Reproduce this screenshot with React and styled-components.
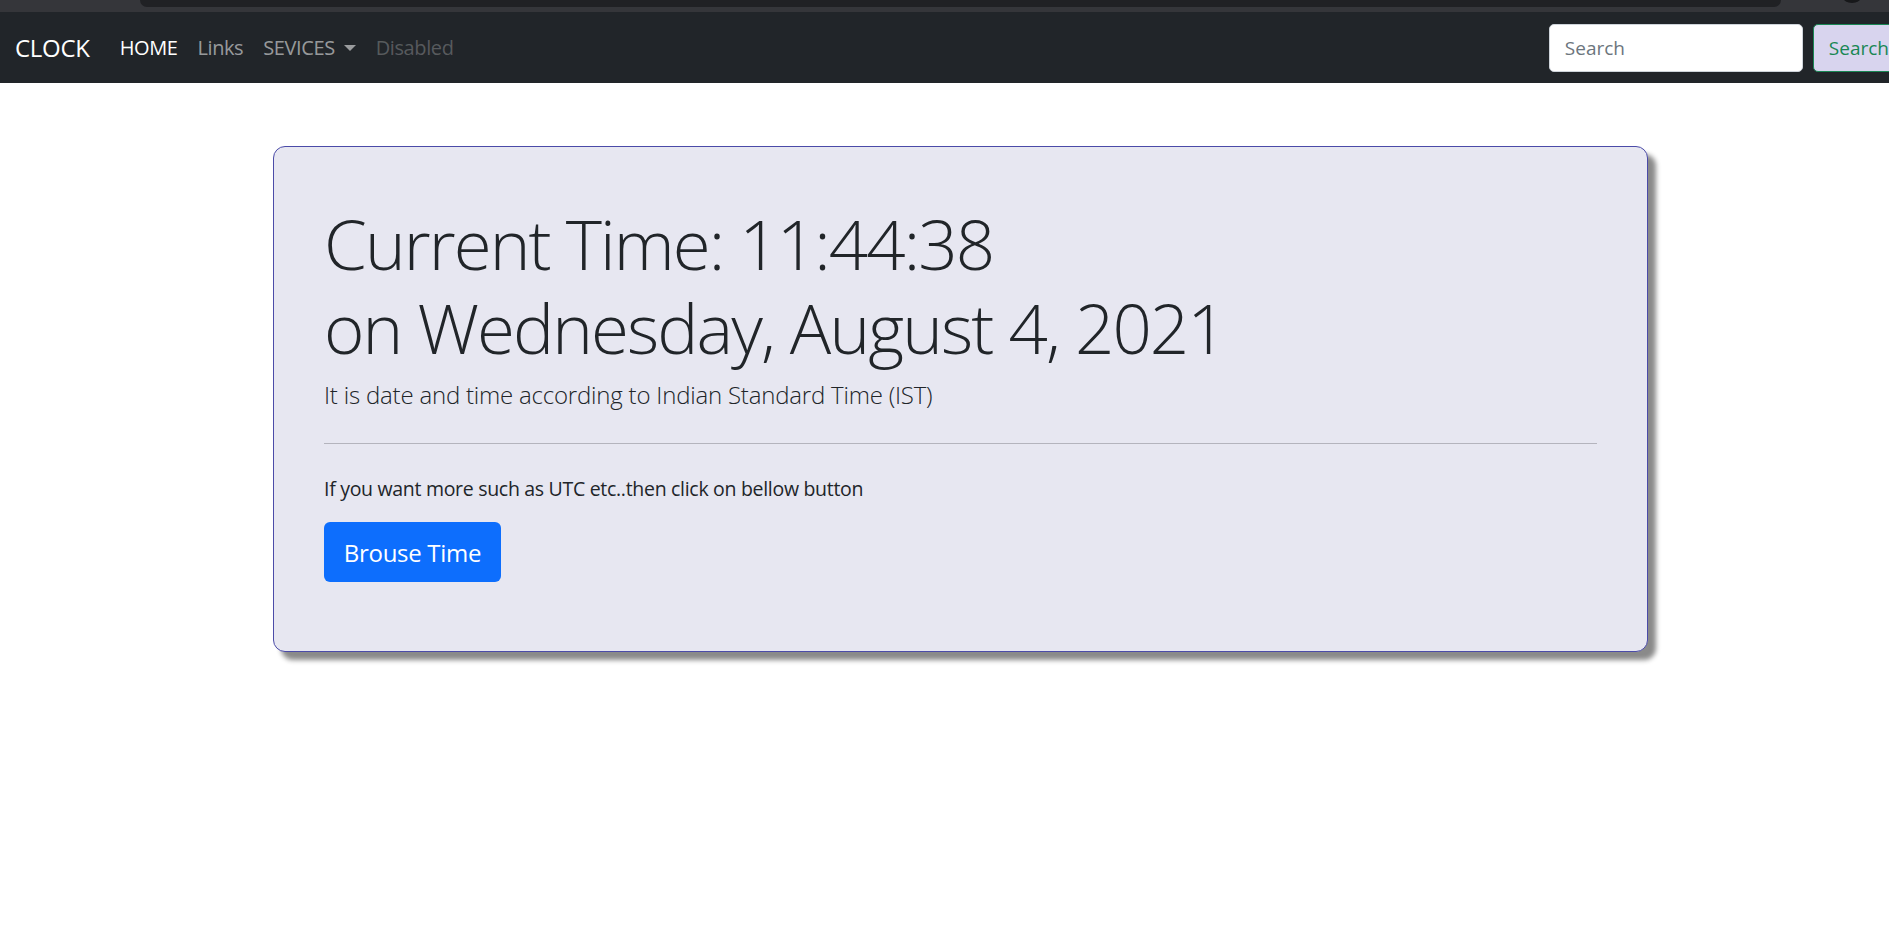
import React from 'react';
import styled, { createGlobalStyle } from 'styled-components';

const GlobalStyle = createGlobalStyle`
  html, body {
    margin: 0;
    padding: 0;
    background: #ffffff;
    overflow-x: hidden;
  }

  body {
    font-family: 'Open Sans', 'Noto Sans', sans-serif;
    color: #212529;
  }

  * {
    box-sizing: border-box;
  }
`;

const Page = styled.div`
  min-height: 946px;
  width: 1924px;
`;

const ChromeStrip = styled.div`
  height: 12px;
  background: #35363a;
  display: flex;
  align-items: flex-start;
  padding-left: 140px;
`;

const AddressBar = styled.div`
  width: 1641px;
  height: 7px;
  background: #202124;
  border-radius: 0 0 8px 8px;
`;

const Avatar = styled.div`
  width: 18px;
  height: 12px;
  margin-left: 62px;
  margin-top: -9px;
  border-radius: 50%;
  background: #17181a;
`;

const Navbar = styled.nav`
  height: 71px;
  background: #212529;
  display: flex;
  align-items: center;
  padding: 0 15px;
`;

const Brand = styled.a`
  font-size: 24px;
  color: #ffffff;
  margin-right: 20px;
  letter-spacing: -0.3px;
`;

const NavList = styled.ul`
  display: flex;
  align-items: center;
  list-style: none;
  margin: 0;
  padding: 0;
`;

const NavLink = styled.a`
  display: flex;
  align-items: center;
  padding: 10px;
  font-size: 20px;
  letter-spacing: -0.4px;
  color: ${(p) =>
    p.$active ? '#ffffff' : p.$disabled ? 'rgba(255,255,255,0.25)' : 'rgba(255,255,255,0.55)'};
`;

const Caret = styled.span`
  display: inline-block;
  margin-left: 9px;
  border-top: 6px solid rgba(255, 255, 255, 0.55);
  border-left: 6px solid transparent;
  border-right: 6px solid transparent;
`;

const SearchForm = styled.form`
  display: flex;
  gap: 10px;
  margin-left: auto;
  margin-right: 4px;
`;

const SearchInput = styled.input`
  width: 254px;
  height: 48px;
  padding: 0 15px;
  font-family: inherit;
  font-size: 19px;
  color: #212529;
  background: #ffffff;
  border: 1px solid #ced4da;
  border-radius: 5px;
  outline: none;

  &::placeholder {
    color: #6c757d;
  }
`;

const SearchButton = styled.button`
  height: 48px;
  padding: 0 15px;
  font-family: inherit;
  font-size: 19px;
  color: #198754;
  background: #d8d4ee;
  border: 1px solid #198754;
  border-radius: 5px;
`;

const Main = styled.main`
  padding: 63px 0 0 273px;
`;

const Card = styled.section`
  width: 1375px;
  height: 506px;
  padding: 54px 50px 0;
  background: #e7e7f1;
  border: 1px solid #4b4ba8;
  border-radius: 12px;
  box-shadow: 8px 8px 5px #8a8a8a;
`;

const Display = styled.h1`
  margin: 0;
  font-size: 69px;
  font-weight: 300;
  line-height: 84px;
  letter-spacing: -1.9px;
  color: #212529;
`;

const Lead = styled.p`
  margin: 9px 0 0;
  font-size: 24px;
  font-weight: 300;
  letter-spacing: -0.2px;
`;

const Rule = styled.hr`
  margin: 32px 0 0;
  border: 0;
  border-top: 1px solid #b4b4bd;
`;

const Text = styled.p`
  margin: 31px 0 0;
  font-size: 19.5px;
  letter-spacing: -0.3px;
`;

const PrimaryButton = styled.button`
  margin-top: 20px;
  width: 177px;
  height: 60px;
  padding: 0;
  font-family: inherit;
  font-size: 24px;
  letter-spacing: -0.3px;
  color: #ffffff;
  background: #0d6efd;
  border: 0;
  border-radius: 6px;
`;

const App = () => {
  return (
    <Page>
      <GlobalStyle />
      <ChromeStrip>
        <AddressBar />
        <Avatar />
      </ChromeStrip>
      <Navbar>
        <Brand>CLOCK</Brand>
        <NavList>
          <li>
            <NavLink $active>HOME</NavLink>
          </li>
          <li>
            <NavLink>Links</NavLink>
          </li>
          <li>
            <NavLink>
              SEVICES
              <Caret />
            </NavLink>
          </li>
          <li>
            <NavLink $disabled>Disabled</NavLink>
          </li>
        </NavList>
        <SearchForm onSubmit={(e) => e.preventDefault()}>
          <SearchInput type="search" placeholder="Search" />
          <SearchButton type="submit">Search</SearchButton>
        </SearchForm>
      </Navbar>
      <Main>
        <Card>
          <Display>
            Current Time: 11:44:38
            <br />
            on Wednesday, August 4, 2021
          </Display>
          <Lead>It is date and time according to Indian Standard Time (IST)</Lead>
          <Rule />
          <Text>If you want more such as UTC etc..then click on bellow button</Text>
          <PrimaryButton>Brouse Time</PrimaryButton>
        </Card>
      </Main>
    </Page>
  );
};

export default App;
